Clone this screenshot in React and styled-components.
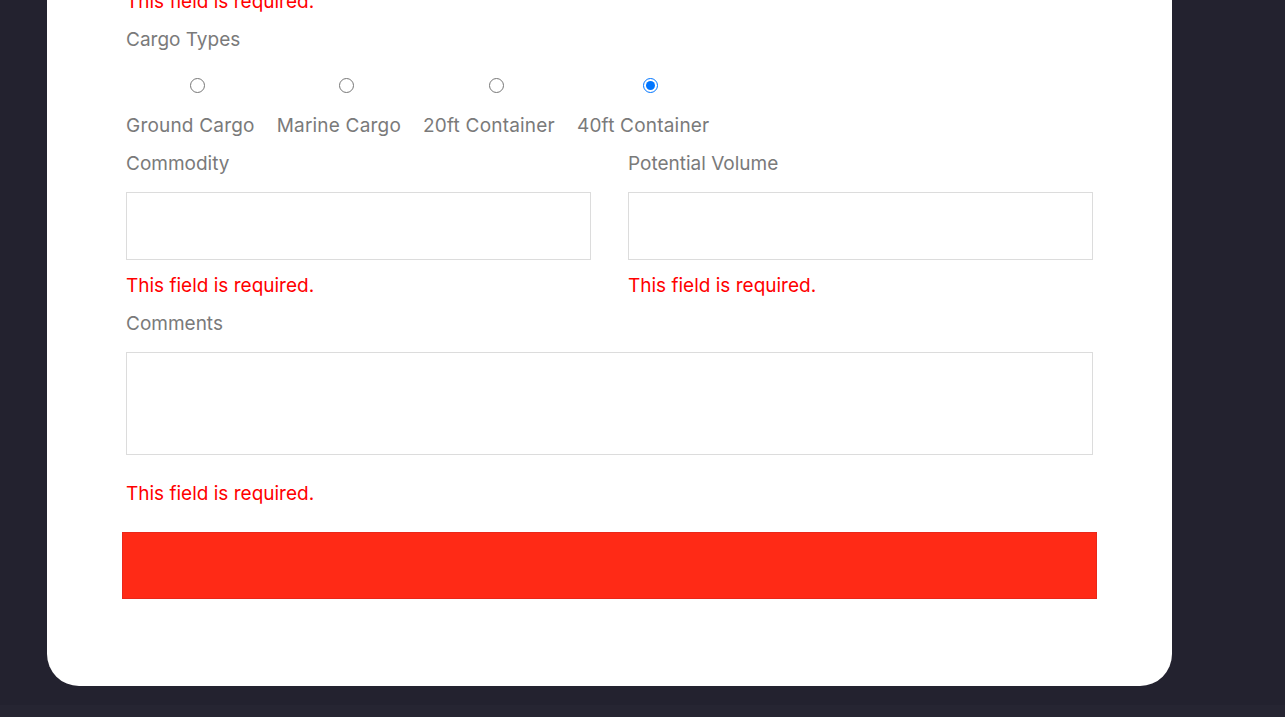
import styled, { createGlobalStyle } from 'styled-components';

const GlobalStyle = createGlobalStyle`
    html, body {
        margin: 0;
        padding: 0;
        background: #23222f;
        overflow: hidden;
    }
    body {
        font-family: "Inter", "Liberation Sans", sans-serif;
    }
`;

const Page = styled.div`
    display: flex;
    flex-direction: column;
    height: 717px;
`;

const Card = styled.form`
    margin: -52px 0 0 47px;
    width: 1125px;
    box-sizing: border-box;
    padding: 40px 79px 87px;
    background: #fff;
    border-radius: 0 0 32px 32px;
    display: flex;
    flex-direction: column;
    gap: 11px;
`;

const Footer = styled.div`
    margin-top: 19px;
    height: 12px;
    background: #262532;
`;

const Group = styled.div`
    display: flex;
    flex-direction: column;
`;

const Row = styled.div`
    display: grid;
    grid-template-columns: 1fr 1fr;
    column-gap: 37px;
`;

const Label = styled.label`
    display: block;
    font-size: 19px;
    line-height: 27px;
    color: #7a7a7a;
    margin-bottom: ${p => p.$gap || 15}px;
`;

const Error = styled.div`
    font-size: 19px;
    line-height: 27px;
    color: #ff0000;
`;

const Input = styled.input`
    box-sizing: border-box;
    width: 100%;
    height: 68px;
    border: 1px solid #dcdcdc;
    margin: 0 0 12px;
    font: inherit;
`;

const TextArea = styled.textarea`
    display: block;
    box-sizing: border-box;
    width: 100%;
    height: 103px;
    border: 1px solid #dcdcdc;
    margin: 0 0 25px;
    resize: none;
    font: inherit;
`;

const Options = styled.div`
    display: flex;
    gap: 22px;
`;

const Option = styled.label`
    display: flex;
    flex-direction: column;
    align-items: center;
    font-size: 19px;
    line-height: 27px;
    letter-spacing: 0.2px;
    color: #7a7a7a;
    white-space: nowrap;
`;

const Radio = styled.input`
    width: 15px;
    height: 15px;
    margin: 0 0 19px 15px;
`;

const Submit = styled.button`
    margin: 14px -4px 0;
    height: 67px;
    background: #ff2a16;
    border: 1px solid #e9271a;
    cursor: pointer;
`;

const cargo = ['Ground Cargo', 'Marine Cargo', '20ft Container', '40ft Container'];

export default function App() {
    return (
        <>
            <GlobalStyle />
            <Page>
                <Card onSubmit={e => e.preventDefault()}>
                    <Error>This field is required.</Error>
                    <Group>
                        <Label $gap={25}>Cargo Types</Label>
                        <Options>
                            {cargo.map((c, i) => (
                                <Option key={c}>
                                    <Radio type="radio" name="cargo" defaultChecked={i === 3} />
                                    {c}
                                </Option>
                            ))}
                        </Options>
                    </Group>
                    <Row>
                        <Group>
                            <Label>Commodity</Label>
                            <Input type="text" />
                            <Error>This field is required.</Error>
                        </Group>
                        <Group>
                            <Label>Potential Volume</Label>
                            <Input type="text" />
                            <Error>This field is required.</Error>
                        </Group>
                    </Row>
                    <Group>
                        <Label>Comments</Label>
                        <TextArea />
                        <Error>This field is required.</Error>
                    </Group>
                    <Submit type="submit" />
                </Card>
                <Footer />
            </Page>
        </>
    );
}
